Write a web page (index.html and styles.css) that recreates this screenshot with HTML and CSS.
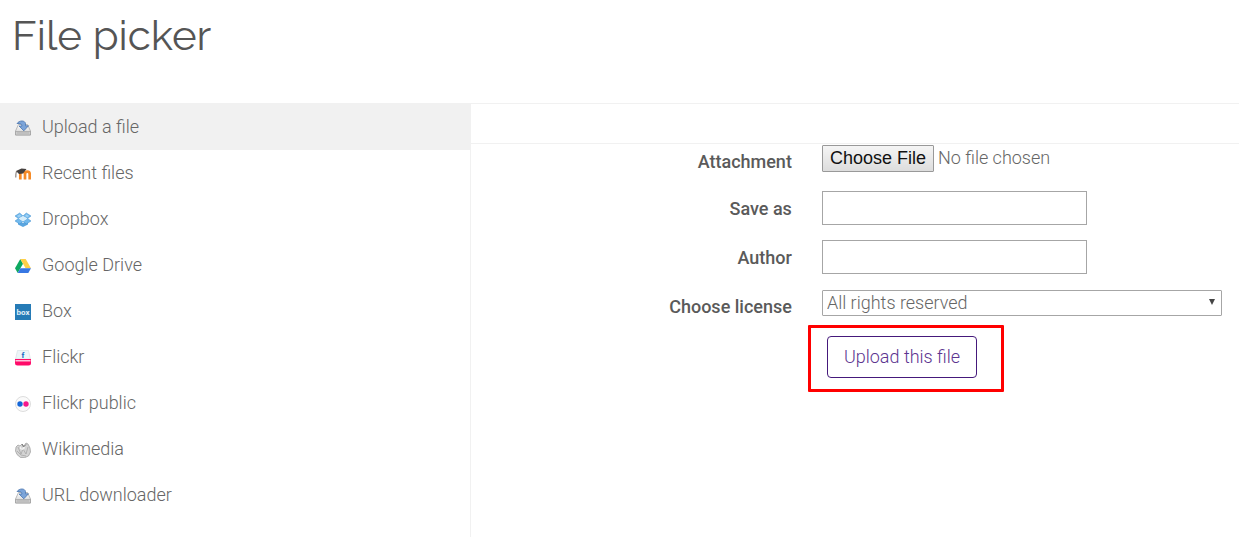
FILE: index.html
```html
<!DOCTYPE html>
<html lang="en">
<head>
    <meta charset="UTF-8">
    <meta name="viewport" content="width=device-width, initial-scale=1.0">
    <title>File picker</title>
    <link rel="stylesheet" href="styles.css">
</head>
<body>
    <svg class="defs" aria-hidden="true">
        <defs>
            <linearGradient id="tray" x2="0" y2="1">
                <stop offset="0" stop-color="#fff"/>
                <stop offset="1" stop-color="#ccc"/>
            </linearGradient>
            <symbol id="icon-download" viewBox="0 0 16 16">
                <path d="M3.500 4.500h9l3 6.500v4H.5v-4z" fill="url(#tray)" stroke="#aaa" stroke-width=".8"/>
                <path d="M.5 11.500h15v3.500H.5z" fill="#ccc" stroke="#999" stroke-width=".6"/>
                <path d="M2 13h12" stroke="#b3b3b3"/>
                <path d="M2 3.500C4.500 0 10 .3 10.500 3.500v2.300h3L8.800 10.800 4 6h3c0-1.800-2-2.800-5-2.500z" fill="#7ba4d9" stroke="#4873ae" stroke-width=".8"/>
            </symbol>
        </defs>
    </svg>

    <header>
        <h1>File picker</h1>
    </header>

    <div class="picker">
        <nav class="repositories">
            <a href="#upload" class="active">
                <svg class="icon"><use href="#icon-download"/></svg>
                Upload a file
            </a>
            <a href="#recent">
                <svg class="icon" viewBox="0 0 16 16">
                    <path d="M5.300 13.500V8c0-3.300 4.700-3.300 4.700 0v5.500M10 8c0-3.300 4.700-3.300 4.700 0v5.500" fill="none" stroke="#f68b28" stroke-width="2.700"/>
                    <path d="M1 5 6.500 2.500l5 .5L8 7.500 4 8z" fill="#45403e"/>
                    <path d="M1.500 5Q.7 7.500.8 11.500" fill="none" stroke="#776c65"/>
                </svg>
                Recent files
            </a>
            <a href="#dropbox">
                <svg class="icon" viewBox="0 0 16 16">
                    <path d="M3 8.500v4L8 15l5-2.500v-4L8 11z" fill="#5aa5df"/>
                    <path d="m4.700 1 3.300 3-4.600 2.500L0 4zm6.600 0L16 4l-3.400 2.500L8 4zM0 9l3.400-2.500L8 9.500 4.700 12zm16 0-3.400-2.500L8 9.500l3.300 2.500z" fill="#72b9ed" stroke="#3d8fce" stroke-width=".5"/>
                    <path d="m8 4 4.600 2.500L8 9.500 3.400 6.500z" fill="#d5edfb"/>
                    <path d="m2 4 2.700-1.800L6.500 4 3.500 5.300zM10 4l1.500-1.800L14 4l-1.500 1.300z" fill="#9ed1f4"/>
                </svg>
                Dropbox
            </a>
            <a href="#drive">
                <svg class="icon" viewBox="0 0 16 16">
                    <path d="M5.300 1 0 10.200 2.700 15 8 5.800z" fill="#0da960"/>
                    <path d="M5.300 1h5.400l5.300 9.200h-5.400z" fill="#ffcf48"/>
                    <path d="M5.400 10.200H16L13.300 15H2.700z" fill="#3777e3"/>
                </svg>
                Google Drive
            </a>
            <a href="#box">
                <svg class="icon" viewBox="0 0 16 16">
                    <path d="M0 0h16v16H0z" fill="#267bb6"/>
                    <text x="8" y="11" class="box-name">box</text>
                </svg>
                Box
            </a>
            <a href="#flickr">
                <svg class="icon" viewBox="0 0 16 16">
                    <path d="M2.500.5h11L15.500 9H.5z" fill="#edf5f8" stroke="#d3dee3" stroke-width=".6"/>
                    <path d="M0 9h16v4q0 2.500-2.500 2.500h-11Q0 15.500 0 13z" fill="#ff0b69"/>
                    <path d="M.5 10h15v1.500H.5z" fill="#ffc3dc"/>
                    <text x="8" y="8" class="flickr-name">f</text>
                </svg>
                Flickr
            </a>
            <a href="#flickr-public">
                <svg class="icon" viewBox="0 0 16 16">
                    <circle cx="8" cy="8" r="7.500" fill="#fafafa" stroke="#ddd"/>
                    <circle cx="5" cy="8" r="2.700" fill="#1466d8"/>
                    <circle cx="11" cy="8" r="2.700" fill="#f4188b"/>
                </svg>
                Flickr public
            </a>
            <a href="#wikimedia">
                <svg class="icon" viewBox="0 0 16 16">
                    <path d="m1 5 2-2 2 1 2-2 2 2 2-3 2 1 2 4 .5 4-2 4-4 1.700-4-.2-3.500-3L.5 9z" fill="#d4d4d4" stroke="#999" stroke-width=".7"/>
                    <path d="m3 5 3 7 2-5 3 5 2-7M2 9l4 4 5 1" fill="none" stroke="#999" stroke-width=".6"/>
                    <path d="m5 4 2 3 2-3 1 2-2 2-3-1z" fill="#f3f3f3"/>
                    <path d="m7 2 1.500 3L11 2.500" fill="none" stroke="#666" stroke-width=".8"/>
                </svg>
                Wikimedia
            </a>
            <a href="#url">
                <svg class="icon"><use href="#icon-download"/></svg>
                URL downloader
            </a>
        </nav>

        <main>
            <div class="toolbar"></div>
            <form>
                <div class="row">
                    <label for="attachment">Attachment</label>
                    <input type="file" id="attachment">
                </div>
                <div class="row">
                    <label for="saveas">Save as</label>
                    <input type="text" id="saveas">
                </div>
                <div class="row">
                    <label for="author">Author</label>
                    <input type="text" id="author">
                </div>
                <div class="row">
                    <label for="license">Choose license</label>
                    <div class="select-box">
                        <select id="license">
                            <option>All rights reserved</option>
                        </select>
                        <svg class="arrow" viewBox="0 0 6 6"><path d="M0 0h6L3 6z" fill="#444"/></svg>
                    </div>
                </div>
                <div class="row">
                    <div class="highlight">
                        <button type="button">Upload this file</button>
                    </div>
                </div>
            </form>
        </main>
    </div>
</body>
</html>
```

FILE: styles.css
```css
* {
    box-sizing: border-box;
}
body {
    display: flex;
    flex-direction: column;
    min-height: 100vh;
    margin: 0;
    background-color: #fff;
    color: #666;
    font-family: Roboto, sans-serif;
    font-size: 18px;
    font-weight: 300;
    line-height: 26px;
}
.defs {
    position: absolute;
    width: 0;
    height: 0;
}
header {
    padding: 12px 12px 43px;
}
h1 {
    margin: 0;
    color: #555;
    font-family: Raleway, Lato, sans-serif;
    font-size: 42px;
    font-weight: 400;
    line-height: 48px;
}
.picker {
    display: flex;
    flex: 1;
}
.repositories {
    width: 38%;
    border-right: 1px solid #f1f1f1;
}
.repositories a {
    display: flex;
    align-items: center;
    gap: 11px;
    height: 46px;
    padding-left: 15px;
    color: #666;
    text-decoration: none;
}
.repositories a.active {
    height: 47px;
    background-color: #f1f1f1;
}
.icon {
    width: 16px;
    height: 16px;
    margin-top: 2px;
}
.box-name {
    fill: #e3f1fa;
    font: bold 8px Roboto, sans-serif;
    text-anchor: middle;
}
.flickr-name {
    fill: #146ac4;
    font: bold 8px Roboto, sans-serif;
    text-anchor: middle;
}
main {
    flex: 1;
}
.toolbar {
    height: 41px;
    border-top: 1px solid #f1f1f1;
    border-bottom: 1px solid #f1f1f1;
}
form {
    display: flex;
    flex-direction: column;
    gap: 15px;
    padding: 1px 17px 0 0;
}
.row {
    display: grid;
    grid-template-columns: 321fr 400fr;
    column-gap: 30px;
    align-items: center;
    min-height: 34px;
}
.row:first-child {
    min-height: 31px;
}
label {
    padding-top: 2px;
    color: #5a5a5a;
    font-weight: 500;
    text-align: right;
}
input, select, button {
    color: #666;
    font: inherit;
}
input[type="file"] {
    align-self: start;
    width: 100%;
    height: 27px;
}
input[type="file"]::file-selector-button {
    height: 27px;
    margin: 0 4px 0 0;
    padding: 0 7px;
    border: 1px solid #999;
    border-radius: 1px;
    background: linear-gradient(#f5f5f5, #ddd);
    color: #111;
    font: 18px "Liberation Sans", sans-serif;
}
input[type="text"] {
    width: 265px;
    height: 34px;
    padding: 4px;
    border: 1px solid #a6a6a6;
}
.select-box {
    position: relative;
    display: flex;
    align-self: start;
    padding-top: 1px;
}
select {
    appearance: none;
    width: 100%;
    height: 26px;
    padding: 0 20px 0 4px;
    border: 1px solid #a6a6a6;
    border-radius: 1px;
    background-color: #fff;
    line-height: 24px;
}
.arrow {
    position: absolute;
    top: 10px;
    right: 7px;
    width: 6px;
    height: 6px;
    pointer-events: none;
}
.highlight {
    grid-column: 2;
    justify-self: start;
    margin: -13px 0 0 -14px;
    padding: 8px 24px 11px 16px;
    border: 3px solid #f00;
    border-radius: 1px;
}
button {
    display: block;
    height: 42px;
    padding: 0 16px;
    border: 1px solid #45197b;
    border-radius: 4px;
    background-color: #fff;
    color: #5c3490;
    cursor: pointer;
}
```
